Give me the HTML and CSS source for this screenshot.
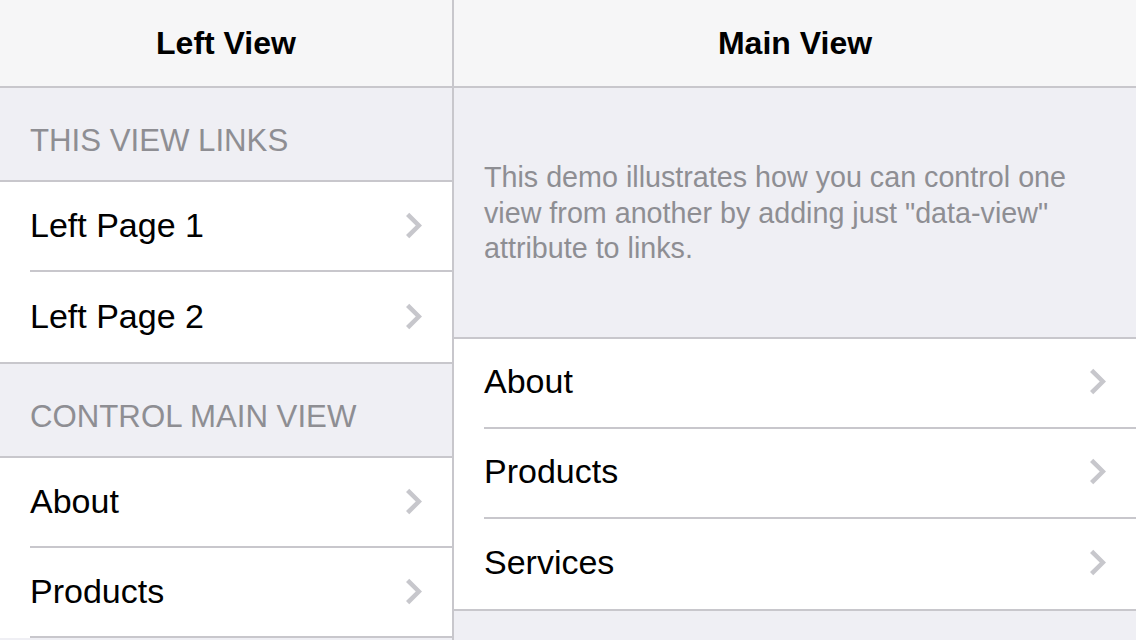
FILE: index.html
```html
<!DOCTYPE html>
<html>
<head>
<meta charset="utf-8">
<title>Split View</title>
<link rel="stylesheet" href="styles.css">
</head>
<body>
<div class="app">
  <div class="view view-left">
    <div class="navbar"><div class="nav-title">Left View</div></div>
    <div class="page">
      <div class="block-title">THIS VIEW LINKS</div>
      <div class="list">
        <a class="item"><span class="item-title">Left Page 1</span><svg class="chev" viewBox="0 0 60 120"><path d="m60 61.5-38.25 38.25-9.75-9.75 29.25-28.5-29.25-28.5 9.75-9.75z"/></svg></a>
        <a class="item"><span class="item-title">Left Page 2</span><svg class="chev" viewBox="0 0 60 120"><path d="m60 61.5-38.25 38.25-9.75-9.75 29.25-28.5-29.25-28.5 9.75-9.75z"/></svg></a>
      </div>
      <div class="block-title">CONTROL MAIN VIEW</div>
      <div class="list list-open">
        <a class="item"><span class="item-title">About</span><svg class="chev" viewBox="0 0 60 120"><path d="m60 61.5-38.25 38.25-9.75-9.75 29.25-28.5-29.25-28.5 9.75-9.75z"/></svg></a>
        <a class="item"><span class="item-title">Products</span><svg class="chev" viewBox="0 0 60 120"><path d="m60 61.5-38.25 38.25-9.75-9.75 29.25-28.5-29.25-28.5 9.75-9.75z"/></svg></a>
      </div>
    </div>
  </div>
  <div class="view view-main">
    <div class="navbar"><div class="nav-title">Main View</div></div>
    <div class="page">
      <div class="content-block">This demo illustrates how you can control one view from another by adding just "data-view" attribute to links.</div>
      <div class="list">
        <a class="item"><span class="item-title">About</span><svg class="chev" viewBox="0 0 60 120"><path d="m60 61.5-38.25 38.25-9.75-9.75 29.25-28.5-29.25-28.5 9.75-9.75z"/></svg></a>
        <a class="item"><span class="item-title">Products</span><svg class="chev" viewBox="0 0 60 120"><path d="m60 61.5-38.25 38.25-9.75-9.75 29.25-28.5-29.25-28.5 9.75-9.75z"/></svg></a>
        <a class="item"><span class="item-title">Services</span><svg class="chev" viewBox="0 0 60 120"><path d="m60 61.5-38.25 38.25-9.75-9.75 29.25-28.5-29.25-28.5 9.75-9.75z"/></svg></a>
      </div>
    </div>
  </div>
</div>
</body>
</html>
```

FILE: styles.css
```css
* { box-sizing: border-box; }
html, body {
  margin: 0;
  padding: 0;
  width: 1136px;
  height: 640px;
  overflow: hidden;
  background: #efeff4;
  font-family: "Liberation Sans", Arial, sans-serif;
  color: #000;
}
.app {
  display: flex;
  width: 1136px;
  height: 640px;
  overflow: hidden;
}
.view {
  display: flex;
  flex-direction: column;
  height: 640px;
  overflow: hidden;
  background: #efeff4;
}
.view-left {
  width: 452px;
  flex: none;
}
.view-main {
  flex: 1;
  border-left: 2px solid #c8c7cc;
}
.navbar {
  height: 88px;
  flex: none;
  background: #f6f6f7;
  border-bottom: 2px solid #c8c7cc;
  display: flex;
  align-items: center;
  justify-content: center;
}
.nav-title {
  font-size: 32px;
  font-weight: bold;
  line-height: 40px;
}
.page {
  flex: 1;
}
.block-title {
  padding: 36px 30px 22px;
  font-size: 31.2px;
  line-height: 34px;
  color: #8e8e93;
}
.list {
  background: #fff;
  border-top: 2px solid #c8c7cc;
  border-bottom: 2px solid #c8c7cc;
}
.list-open {
  border-bottom: none;
}
.item {
  display: flex;
  align-items: center;
  justify-content: space-between;
  margin-left: 30px;
  padding-right: 30px;
  padding-bottom: 3px;
  height: 90px;
  border-bottom: 2px solid #c8c7cc;
}
.item:last-child {
  height: 90px;
  border-bottom: none;
}
.list-open .item:last-child {
  border-bottom: 2px solid #c8c7cc;
}
.item-title {
  font-size: 34px;
  line-height: 40px;
}
.chev {
  width: 20px;
  height: 40px;
  fill: #c7c7cc;
  flex: none;
}
.content-block {
  padding: 72px 30px 70px;
  font-size: 28.7px;
  line-height: 35.5px;
  color: #8e8e93;
}
```
